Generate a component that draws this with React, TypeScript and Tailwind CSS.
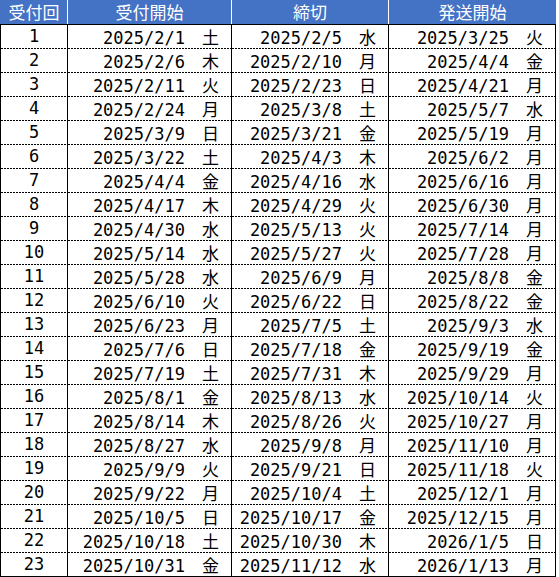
const rows: [string, string, string][] = [
  ['2025/2/1 土', '2025/2/5 水', '2025/3/25 火'],
  ['2025/2/6 木', '2025/2/10 月', '2025/4/4 金'],
  ['2025/2/11 火', '2025/2/23 日', '2025/4/21 月'],
  ['2025/2/24 月', '2025/3/8 土', '2025/5/7 水'],
  ['2025/3/9 日', '2025/3/21 金', '2025/5/19 月'],
  ['2025/3/22 土', '2025/4/3 木', '2025/6/2 月'],
  ['2025/4/4 金', '2025/4/16 水', '2025/6/16 月'],
  ['2025/4/17 木', '2025/4/29 火', '2025/6/30 月'],
  ['2025/4/30 水', '2025/5/13 火', '2025/7/14 月'],
  ['2025/5/14 水', '2025/5/27 火', '2025/7/28 月'],
  ['2025/5/28 水', '2025/6/9 月', '2025/8/8 金'],
  ['2025/6/10 火', '2025/6/22 日', '2025/8/22 金'],
  ['2025/6/23 月', '2025/7/5 土', '2025/9/3 水'],
  ['2025/7/6 日', '2025/7/18 金', '2025/9/19 金'],
  ['2025/7/19 土', '2025/7/31 木', '2025/9/29 月'],
  ['2025/8/1 金', '2025/8/13 水', '2025/10/14 火'],
  ['2025/8/14 木', '2025/8/26 火', '2025/10/27 月'],
  ['2025/8/27 水', '2025/9/8 月', '2025/11/10 月'],
  ['2025/9/9 火', '2025/9/21 日', '2025/11/18 火'],
  ['2025/9/22 月', '2025/10/4 土', '2025/12/1 月'],
  ['2025/10/5 日', '2025/10/17 金', '2025/12/15 月'],
  ['2025/10/18 土', '2025/10/30 木', '2026/1/5 日'],
  ['2025/10/31 金', '2025/11/12 水', '2026/1/13 月'],
];

const widths = ['w-[67px]', 'w-[164px]', 'w-[157px]', 'w-[168px]'];
const headers = ['受付回', '受付開始', '締切', '発送開始'];

const mono = "font-['DejaVu_Sans_Mono',monospace] text-[17px]";
const jp = "font-['Noto_Sans_CJK_JP',sans-serif] text-[17px]";

function Cell({ idx, last, children }: { idx: number; last: boolean; children: React.ReactNode }) {
  return (
    <div
      className={`${widths[idx]} flex h-[24px] flex-col border-l border-black ${idx === 3 ? 'border-r' : ''}`}
    >
      <div className="h-[23px] overflow-hidden">{children}</div>
      {last ? (
        <div className="h-px bg-black" />
      ) : (
        <div className="h-px bg-[repeating-linear-gradient(90deg,#000_0_2px,transparent_2px_3px)]" />
      )}
    </div>
  );
}

function DateCell({ value }: { value: string }) {
  const [date, wd] = value.split(' ');
  return (
    <div className={`${mono} pr-[12px] text-right leading-[23px] whitespace-nowrap text-black`}>
      {date}
      <span className={`${jp} ml-[17px] inline-block w-[17px] text-left`}>{wd}</span>
    </div>
  );
}

export default function App() {
  return (
    <div className="min-h-[577px] w-[559px] bg-white">
      <div className="flex h-[25px] w-[556px] flex-col">
        <div className="flex h-[24px] bg-[#4472c4]">
          {headers.map((h, i) => (
            <div
              key={h}
              className={`${widths[i]} border-l text-center ${i === 0 ? 'border-[#4472c4]' : 'border-white'} ${jp} leading-[24px] text-white`}
            >
              {h}
            </div>
          ))}
        </div>
        <div className="h-px bg-black" />
      </div>
      {rows.map((r, i) => {
        const last = i === rows.length - 1;
        return (
          <div key={i} className="flex">
            <Cell idx={0} last={last}>
              <div className={`${mono} text-center leading-[23px] text-black`}>{i + 1}</div>
            </Cell>
            {r.map((v, j) => (
              <Cell key={j} idx={j + 1} last={last}>
                <DateCell value={v} />
              </Cell>
            ))}
          </div>
        );
      })}
    </div>
  );
}
